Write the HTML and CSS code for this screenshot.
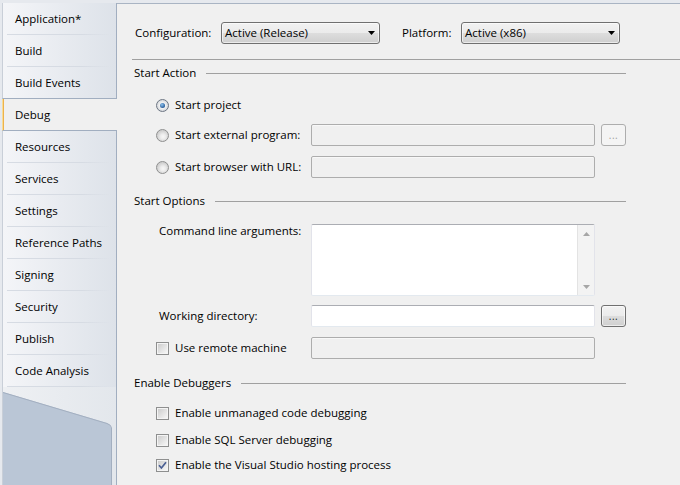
FILE: index.html
```html
<!DOCTYPE html>
<html>
<head>
<meta charset="utf-8">
<title>Debug</title>
<link rel="stylesheet" href="styles.css">
</head>
<body>
<div class="window">
  <nav class="sidebar">
    <div class="tab">Application*</div>
    <div class="tab">Build</div>
    <div class="tab before-active">Build Events</div>
    <div class="tab active">Debug</div>
    <div class="tab">Resources</div>
    <div class="tab">Services</div>
    <div class="tab">Settings</div>
    <div class="tab">Reference Paths</div>
    <div class="tab">Signing</div>
    <div class="tab">Security</div>
    <div class="tab">Publish</div>
    <div class="tab">Code Analysis</div>
    <div class="sidebar-foot">
      <svg class="foot-shape" width="109" height="100" viewBox="0 0 109 100">
        <path d="M0 0 L104 31 Q108 32.5 108 36 L108 100 L0 100 Z" fill="#bac6d6"/>
        <path d="M0 0.5 L104 31.5 Q108.5 33 108.5 36 L108.5 100" fill="none" stroke="#a3afc0" stroke-width="1"/>
      </svg>
    </div>
  </nav>

  <main class="panel">
    <div class="config-row">
      <span class="cfg-label">Configuration:</span>
      <div class="combo"><span>Active (Release)</span><svg class="combo-arrow" width="7" height="4" viewBox="0 0 7 4"><path d="M0 0H7L3.5 4Z"/></svg></div>
      <span class="cfg-label platform">Platform:</span>
      <div class="combo"><span>Active (x86)</span><svg class="combo-arrow" width="7" height="4" viewBox="0 0 7 4"><path d="M0 0H7L3.5 4Z"/></svg></div>
    </div>
    <div class="rule"></div>

    <div class="group-head gh-action"><span>Start Action</span><span class="head-line"></span></div>
    <div class="rows">
      <div class="row r-project"><label class="choice"><span class="radio checked"></span>Start project</label></div>
      <div class="row r-external"><label class="choice"><span class="radio"></span>Start external program:</label><div class="textbox disabled"></div><div class="browse disabled">...</div></div>
      <div class="row r-url"><label class="choice"><span class="radio"></span>Start browser with URL:</label><div class="textbox disabled"></div></div>
    </div>

    <div class="group-head gh-options"><span>Start Options</span><span class="head-line"></span></div>
    <div class="rows">
      <div class="row r-args">
        <span class="field-label">Command line arguments:</span>
        <div class="textarea">
          <div class="ta-body"></div>
          <div class="vscroll">
            <span class="sb-btn"><svg width="7" height="4" viewBox="0 0 7 4"><path d="M0 4L3.5 0L7 4Z"/></svg></span>
            <span class="sb-btn"><svg width="7" height="4" viewBox="0 0 7 4"><path d="M0 0H7L3.5 4Z"/></svg></span>
          </div>
        </div>
      </div>
      <div class="row r-wd"><span class="field-label">Working directory:</span><div class="textbox"></div><div class="browse">...</div></div>
      <div class="row r-remote"><label class="choice"><span class="check"></span>Use remote machine</label><div class="textbox disabled"></div></div>
    </div>

    <div class="group-head gh-debug"><span>Enable Debuggers</span><span class="head-line"></span></div>
    <div class="rows">
      <div class="row cb-row r-cb1"><label class="choice wide"><span class="check"></span>Enable unmanaged code debugging</label></div>
      <div class="row cb-row r-cb2"><label class="choice wide"><span class="check"></span>Enable SQL Server debugging</label></div>
      <div class="row cb-row r-cb3"><label class="choice wide"><span class="check checked"><svg width="11" height="11" viewBox="0 0 11 11"><path d="M2 5.3 L4.4 8 L9 2.2" fill="none" stroke="#4a5f93" stroke-width="1.7"/></svg></span>Enable the Visual Studio hosting process</label></div>
    </div>
  </main>
</div>
</body>
</html>
```

FILE: styles.css
```css
* { box-sizing: border-box; }

html, body {
  margin: 0;
  padding: 0;
}

body {
  background: #e6e9ee;
  font-family: "Open Sans", "Noto Sans", sans-serif;
  font-size: 11.5px;
  line-height: 16px;
  color: #000;
}

.window {
  display: flex;
  width: 680px;
  height: 485px;
  overflow: hidden;
}

/* ---------- sidebar ---------- */
.sidebar {
  width: 117px;
  flex: none;
  display: flex;
  flex-direction: column;
  padding: 3px 0 0 2px;
}

.tab {
  height: 32px;
  flex: none;
  display: flex;
  align-items: center;
  padding-left: 12px;
  border-left: 1px solid #c9cfd8;
  border-right: 1px solid #a1aec0;
  background:
    linear-gradient(to right, rgba(213,218,226,0) 4px, #d6dbe3 4px, #d6dbe3 70%, rgba(213,218,226,0) 96%) left bottom / 100% 1px no-repeat,
    linear-gradient(to right, #f4f5f8, #dde2e9);
  white-space: nowrap;
}

.tab.before-active {
  border-bottom: 1px solid #a1aec0;
  background: linear-gradient(to right, #f4f5f8, #dde2e9);
}

.tab.active {
  background: #f0f0f0;
  border-right: none;
  border-left: 1px solid #f7dc97;
  box-shadow: inset 1px 0 0 #eeb24a;
  border-bottom: 1px solid #a1aec0;
}

.sidebar-foot {
  flex: 1;
  padding-top: 5px;
  border-left: 1px solid #c9cfd8;
  border-right: 1px solid #a1aec0;
  background: linear-gradient(to right, #eef0f3, #e3e7ec);
  overflow: hidden;
}

.foot-shape {
  display: block;
}

/* ---------- panel ---------- */
.panel {
  flex: 1;
  min-width: 0;
  margin-top: 3px;
  border-top: 1px solid #a9b4c3;
  background: #f0f0f0;
}

.config-row {
  display: flex;
  align-items: center;
  padding: 18px 0 0 18px;
}

.cfg-label {
  width: 86px;
  flex: none;
}

.cfg-label.platform {
  width: 59px;
  margin-left: 22px;
}

.combo {
  width: 159px;
  height: 22px;
  flex: none;
  display: flex;
  align-items: center;
  padding-left: 3px;
  border: 1px solid #707070;
  border-radius: 3px;
  background: linear-gradient(#f2f2f2 0%, #ebebeb 50%, #dddddd 51%, #cfcfcf 100%);
  box-shadow: inset 0 0 0 1px rgba(255,255,255,0.6);
}

.combo-arrow {
  margin-left: auto;
  margin-right: 4px;
  fill: #000;
}

.rule {
  height: 1px;
  margin: 15px 0 0 15px;
  background: #a0a0a0;
}

.group-head {
  display: flex;
  align-items: center;
  height: 16px;
  margin: 0 54px 0 17px;
}

.head-line {
  flex: 1;
  height: 1px;
  margin-left: 10px;
  background: #a0a0a0;
}

.gh-action { margin-top: 5px; }
.gh-options { margin-top: 15px; }
.gh-debug { margin-top: 16px; }

.rows {
  margin-left: 39px;
}

.row {
  display: flex;
  align-items: center;
  height: 22px;
}

.r-project { margin-top: 13px; }
.r-external { margin-top: 8px; }
.r-url { margin-top: 10px; }
.r-args { margin-top: 15px; height: 72px; align-items: flex-start; }
.r-wd { margin-top: 9px; }
.r-remote { margin-top: 10px; }

.cb-row { height: 20px; }
.r-cb1 { margin-top: 12px; }
.r-cb2 { margin-top: 7px; }
.r-cb3 { margin-top: 5px; }

.choice {
  width: 155px;
  flex: none;
  display: flex;
  align-items: center;
  gap: 6px;
  white-space: nowrap;
}

.choice.wide { width: auto; }

.field-label {
  width: 155px;
  flex: none;
  padding-left: 3px;
  white-space: nowrap;
}

.r-args .field-label { margin-top: -1px; }

/* radio */
.radio {
  width: 13px;
  height: 13px;
  flex: none;
  border-radius: 50%;
  border: 1px solid #8e8f8f;
  background: radial-gradient(circle at 55% 60%, #f7f7f7 0, #ececec 2.5px, #cfcfcf 6px);
  display: flex;
  align-items: center;
  justify-content: center;
}

.radio.checked {
  border-color: #6d7683;
  background: radial-gradient(circle, #ffffff 0, #f1f1f1 3px, #d0d4d9 6px);
}

.radio.checked::after {
  content: "";
  width: 5px;
  height: 5px;
  border-radius: 50%;
  background: radial-gradient(circle at 40% 35%, #8ec3ef, #1c4f8e 80%);
}

/* checkbox */
.check {
  width: 13px;
  height: 13px;
  flex: none;
  padding: 1px;
  border: 1px solid #8e8f8f;
  background: linear-gradient(135deg, #cdcdcd, #f6f6f6) content-box, #f4f4f4;
  display: flex;
  align-items: center;
  justify-content: center;
}

.check svg { display: block; margin: -1px; }

/* text boxes */
.textbox {
  width: 284px;
  height: 22px;
  flex: none;
  background: #fff;
  border: 1px solid;
  border-color: #abadb3 #e2e3ea #e3e9ef #e2e3ea;
  border-radius: 2px;
}

.textbox.disabled {
  background: #f0f0f0;
  border-color: #adadad;
  box-shadow: inset 0 1px 0 #f8f8f8;
}

.textarea {
  width: 284px;
  height: 72px;
  flex: none;
  display: flex;
  background: #fff;
  border: 1px solid;
  border-color: #abadb3 #e2e3ea #e3e9ef #e2e3ea;
  border-radius: 2px;
}

.ta-body { flex: 1; }

.vscroll {
  width: 17px;
  margin: 0 0 0 0;
  display: flex;
  flex-direction: column;
  justify-content: space-between;
  background: #f3f3f3;
  border-left: 1px solid #e3e3e3;
}

.sb-btn {
  height: 17px;
  display: flex;
  align-items: center;
  justify-content: center;
}

.sb-btn svg { fill: #a6a6a6; display: block; }

/* browse buttons */
.browse {
  width: 25px;
  height: 22px;
  flex: none;
  margin-left: 6px;
  border: 1px solid #707070;
  border-radius: 3px;
  background: linear-gradient(#f2f2f2 0%, #ebebeb 50%, #dddddd 51%, #cfcfcf 100%);
  box-shadow: inset 0 0 0 1px rgba(255,255,255,0.6);
  font-size: 10px;
  line-height: 20px;
  text-align: center;
  letter-spacing: 0.5px;
  color: #222;
}

.browse.disabled {
  border-color: #adadad;
  background: #f4f4f4;
  box-shadow: none;
  color: #a0a0a0;
}
```
